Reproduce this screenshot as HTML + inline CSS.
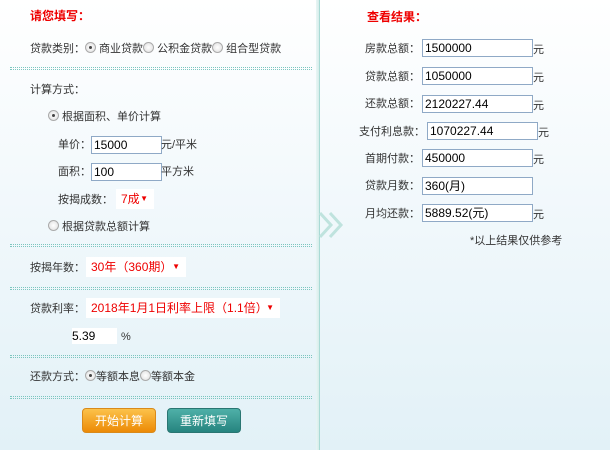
<!DOCTYPE html>
<html><head><meta charset="utf-8"><style>
*{margin:0;padding:0;box-sizing:border-box}
body{width:610px;height:450px;overflow:hidden;font-family:"Liberation Sans","Noto Sans CJK SC",sans-serif;font-size:11px;color:#333;background:linear-gradient(#fff 0%,#f3f9fc 40%,#e2f1f7 100%);position:relative}
.a{position:absolute;white-space:nowrap;line-height:16px}
.t{color:#e00;font-weight:bold;font-size:12px}
.dl{position:absolute;left:10px;width:302px;height:3px;border-top:1px dotted #7cc6bf;border-bottom:1px dotted #7cc6bf}
.in{position:absolute;height:18px;border:1px solid #8fa9c6;background:#fff;font-size:12px;line-height:16px;padding-left:2px;color:#000;white-space:nowrap}
.r{display:inline-block;width:11px;height:11px;border-radius:50%;border:1px solid #aaa;background:radial-gradient(#fff,#ddd);vertical-align:-1px;position:relative}
.r.c::after{content:"";position:absolute;left:3px;top:3px;width:3px;height:3px;border-radius:50%;background:#444}
.sel{position:absolute;background:#fff;color:#e00;height:20px;line-height:20px;padding-left:5px;white-space:nowrap;font-size:12px}
.sel b{font-size:8px;position:absolute;right:6px;top:0}
.btn{position:absolute;width:74px;height:25px;border-radius:4px;color:#fff;text-align:center;line-height:24px;font-size:12px}
.lb{position:absolute;width:120px;text-align:right;left:300px;line-height:16px;white-space:nowrap}
</style></head><body>
<div style="position:absolute;left:316px;top:0;width:4px;height:450px;background:linear-gradient(90deg,#e9f6f5,#cfe9e6)"></div>
<div style="position:absolute;left:319px;top:0;width:1px;height:450px;background:#a9dad5"></div>
<svg style="position:absolute;left:318px;top:210px" width="28" height="30"><path d="M2 3 L13 15 L2 27 M12 3 L23 15 L12 27" fill="none" stroke="#bfe3de" stroke-width="3"/></svg>

<div class="a t" style="left:30px;top:8px">请您填写：</div>
<div class="a" style="left:30px;top:41px">贷款类别：<span class="r c"></span> 商业贷款<span class="r"></span> 公积金贷款<span class="r"></span> 组合型贷款</div>
<div class="dl" style="top:67px"></div>
<div class="a" style="left:30px;top:82px">计算方式：</div>
<div class="a" style="left:48px;top:109px"><span class="r c"></span> 根据面积、单价计算</div>
<div class="a" style="left:58px;top:137px">单价：</div><div class="in" style="left:91px;top:136px;width:71px">15000</div><div class="a" style="left:161px;top:137px">元/平米</div>
<div class="a" style="left:58px;top:164px">面积：</div><div class="in" style="left:91px;top:163px;width:71px">100</div><div class="a" style="left:161px;top:164px">平方米</div>
<div class="a" style="left:58px;top:192px">按揭成数：</div><div class="sel" style="left:116px;top:189px;width:38px">7成<b>▼</b></div>
<div class="a" style="left:48px;top:219px"><span class="r"></span> 根据贷款总额计算</div>
<div class="dl" style="top:244px"></div>
<div class="a" style="left:30px;top:260px">按揭年数：</div><div class="sel" style="left:86px;top:257px;width:100px">30年（360期）<b>▼</b></div>
<div class="dl" style="top:287px"></div>
<div class="a" style="left:30px;top:301px">贷款利率：</div><div class="sel" style="left:86px;top:298px;width:194px">2018年1月1日利率上限（1.1倍）<b>▼</b></div>
<div style="position:absolute;left:72px;top:328px;width:45px;height:16px;background:#fff;line-height:16px;color:#000;font-size:12px">5.39</div><div class="a" style="left:121px;top:329px">%</div>
<div class="dl" style="top:355px"></div>
<div class="a" style="left:30px;top:369px">还款方式：<span class="r c"></span>等额本息<span class="r"></span>等额本金</div>
<div class="dl" style="top:396px"></div>
<div class="btn" style="left:82px;top:408px;background:linear-gradient(#fcc24a,#ec8a06);border:1px solid #d98a1a">开始计算</div>
<div class="btn" style="left:167px;top:408px;background:linear-gradient(#4fb0a8,#26847f);border:1px solid #2a7672">重新填写</div>

<div class="a t" style="left:367px;top:9px">查看结果：</div>
<div class="lb" style="top:41px">房款总额：</div><div class="in" style="left:422px;top:39px;width:111px">1500000</div><div class="a" style="left:533px;top:42px">元</div>
<div class="lb" style="top:69px">贷款总额：</div><div class="in" style="left:422px;top:67px;width:111px">1050000</div><div class="a" style="left:533px;top:70px">元</div>
<div class="lb" style="top:96px">还款总额：</div><div class="in" style="left:422px;top:95px;width:111px">2120227.44</div><div class="a" style="left:533px;top:98px">元</div>
<div class="lb" style="top:124px;left:305px">支付利息款：</div><div class="in" style="left:427px;top:122px;width:111px">1070227.44</div><div class="a" style="left:538px;top:125px">元</div>
<div class="lb" style="top:151px">首期付款：</div><div class="in" style="left:422px;top:149px;width:111px">450000</div><div class="a" style="left:533px;top:152px">元</div>
<div class="lb" style="top:178px">贷款月数：</div><div class="in" style="left:422px;top:177px;width:111px">360(月)</div>
<div class="lb" style="top:206px">月均还款：</div><div class="in" style="left:422px;top:204px;width:111px">5889.52(元)</div><div class="a" style="left:533px;top:207px">元</div>
<div class="a" style="left:470px;top:233px">*以上结果仅供参考</div>
</body></html>
